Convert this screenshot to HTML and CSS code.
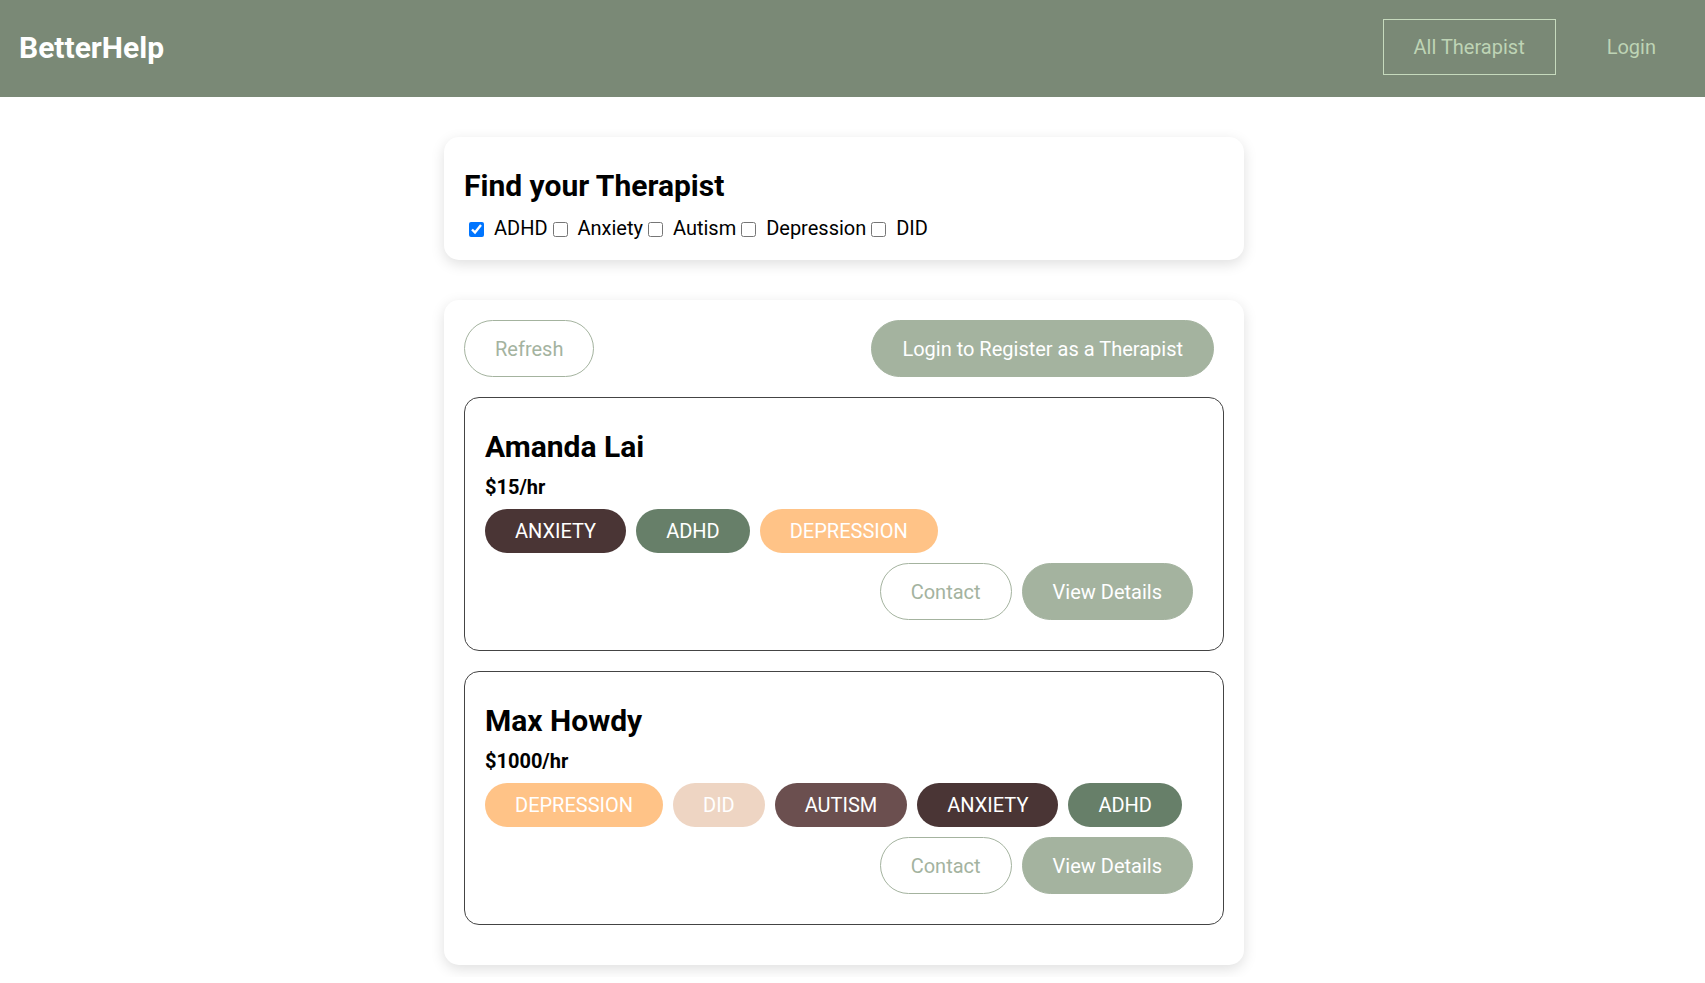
FILE: index.html
```html
<!DOCTYPE html>
<html lang="en">
<head>
<meta charset="utf-8">
<title>BetterHelp</title>
<link rel="stylesheet" href="styles.css">
</head>
<body>
<header class="topbar">
  <div class="brand">BetterHelp</div>
  <nav class="nav">
    <button class="nav-btn nav-btn--outlined">All Therapist</button>
    <button class="nav-btn">Login</button>
  </nav>
</header>
<div class="page-wrap">
  <main class="page">
    <section class="panel filter-panel">
      <h2 class="panel-title">Find your Therapist</h2>
      <div class="filters"><input type="checkbox" class="check" checked> ADHD<input type="checkbox" class="check"> Anxiety<input type="checkbox" class="check"> Autism<input type="checkbox" class="check"> Depression<input type="checkbox" class="check"> DID</div>
    </section>
    <section class="panel list-panel">
      <div class="toolbar">
        <button class="btn btn-outline">Refresh</button>
        <button class="btn btn-solid">Login to Register as a Therapist</button>
      </div>
      <article class="therapist">
        <h2 class="therapist-name">Amanda Lai</h2>
        <div class="price">$15/hr</div>
        <div class="tags">
          <span class="tag tag-anxiety">Anxiety</span>
          <span class="tag tag-adhd">ADHD</span>
          <span class="tag tag-depression">Depression</span>
        </div>
        <div class="actions">
          <button class="btn btn-outline">Contact</button>
          <button class="btn btn-solid">View Details</button>
        </div>
      </article>
      <article class="therapist">
        <h2 class="therapist-name">Max Howdy</h2>
        <div class="price">$1000/hr</div>
        <div class="tags">
          <span class="tag tag-depression">Depression</span>
          <span class="tag tag-did">DID</span>
          <span class="tag tag-autism">Autism</span>
          <span class="tag tag-anxiety">Anxiety</span>
          <span class="tag tag-adhd">ADHD</span>
        </div>
        <div class="actions">
          <button class="btn btn-outline">Contact</button>
          <button class="btn btn-solid">View Details</button>
        </div>
      </article>
    </section>
  </main>
</div>
</body>
</html>
```

FILE: styles.css
```css
* {
  box-sizing: border-box;
}

html, body {
  margin: 0;
  padding: 0;
  background: #ffffff;
}

body {
  font-family: Roboto, "Liberation Sans", Arial, sans-serif;
  font-size: 20px;
  color: #000;
}

.topbar {
  height: 97px;
  background: #7a8976;
  display: flex;
  align-items: center;
  justify-content: space-between;
  padding: 0 18px 0 19px;
}

.brand {
  color: #ffffff;
  font-size: 30px;
  font-weight: 700;
  margin-bottom: 2px;
}

.nav {
  display: flex;
  align-items: center;
  gap: 20px;
  margin-bottom: 3px;
}

.nav-btn {
  font-family: Roboto, "Liberation Sans", Arial, sans-serif;
  font-size: 20px;
  line-height: normal;
  color: #bed4b5;
  background: transparent;
  border: 1px solid transparent;
  padding: 15px 30px;
  cursor: pointer;
}

.nav-btn--outlined {
  border-color: #c6dabd;
}

.page-wrap {
  padding-right: 17px;
}

.page {
  width: 800px;
  margin: 0 auto;
}

.panel {
  background: #ffffff;
  border-radius: 15px;
  box-shadow: 0 4px 14px rgba(0, 0, 0, 0.13);
  padding: 20px;
  margin: 40px 0;
}

.list-panel {
  margin-bottom: 12px;
}

.panel-title {
  font-size: 30px;
  font-weight: 700;
  line-height: normal;
  margin: 11px 0 13px;
}

.filters {
  font-size: 20px;
  line-height: normal;
}

.check {
  width: 15px;
  height: 15px;
  margin: 3px 5px 3px 5px;
  vertical-align: -2px;
  accent-color: #0075ff;
}

.toolbar {
  display: flex;
  justify-content: space-between;
  align-items: center;
}

.btn {
  font-family: Roboto, "Liberation Sans", Arial, sans-serif;
  font-size: 20px;
  line-height: normal;
  padding: 15.5px 30px;
  border-radius: 30px;
  border: 1px solid #a4b39f;
  margin-right: 10px;
  cursor: pointer;
}

.toolbar .btn:first-child {
  margin-right: 0;
}

.btn-outline {
  background: #ffffff;
  color: #a4b39f;
}

.btn-solid {
  background: #a4b39f;
  color: #ffffff;
}

.therapist {
  border: 1px solid #444444;
  border-radius: 15px;
  padding: 20px;
  margin: 20px 0;
}

.therapist-name {
  font-size: 30px;
  font-weight: 700;
  line-height: normal;
  margin: 11px 0 11px;
}

.price {
  font-size: 20px;
  font-weight: 700;
  line-height: normal;
  margin-bottom: 10px;
}

.tags {
  display: flex;
  flex-wrap: wrap;
}

.tag {
  display: inline-block;
  padding: 10px 30px;
  margin-right: 10px;
  border-radius: 25px;
  color: #ffffff;
  text-transform: uppercase;
  font-size: 20px;
  line-height: normal;
}

.tag-anxiety {
  background: #4a3535;
}

.tag-adhd {
  background: #677f69;
}

.tag-depression {
  background: #ffc387;
}

.tag-did {
  background: #eed5c3;
}

.tag-autism {
  background: #6b4f4f;
}

.actions {
  display: flex;
  justify-content: flex-end;
  margin: 10px 0;
}
```
